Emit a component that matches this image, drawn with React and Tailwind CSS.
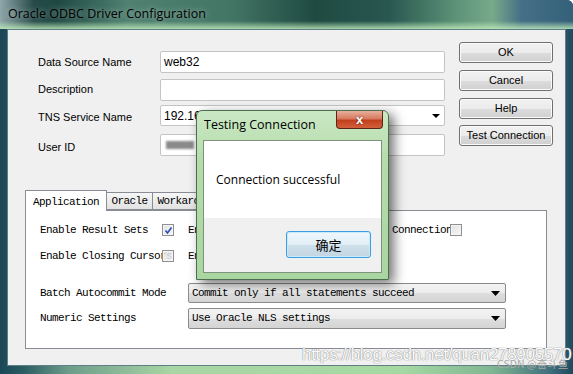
const sans = "font-['Liberation_Sans',Arial,sans-serif]";
const mono = "font-['Liberation_Mono','Courier_New',monospace]";

function Field({ label, children, className = '', labelClass = '' }) {
  return (
    <div className={`flex items-center ${className}`}>
      <span className={`w-[122px] text-[11px] text-black ${labelClass}`}>{label}</span>
      {children}
    </div>
  );
}

function WinButton({ children, className = '' }) {
  return (
    <button className={`block h-[21px] w-[94px] rounded-[3px] border border-[#707070] bg-[linear-gradient(#f2f2f2_0%,#ebebeb_50%,#dddddd_51%,#cfcfcf_100%)] text-[11px] leading-none text-black shadow-[inset_0_0_0_1px_#fbfbfb] ${className}`}>
      {children}
    </button>
  );
}

function Check({ checked }) {
  return (
    <span className="relative z-10 flex h-[12px] w-[12px] items-center justify-center border border-[#8f8f8f] bg-[linear-gradient(135deg,rgba(220,220,220,0.85),rgba(246,246,246,0.85))] shadow-[inset_0_0_0_1px_#f4f4f4]">
      {checked && (
        <svg width="9" height="9" viewBox="0 0 9 9">
          <path d="M1.5 4.5 L3.5 7 L7.5 1.5" fill="none" stroke="#2a48b8" strokeWidth="1.6" />
        </svg>
      )}
    </span>
  );
}

function Combo({ value, className = '' }) {
  return (
    <div className={`flex w-[318px] items-center justify-between rounded-[2px] border border-[#8a8a8a] bg-[linear-gradient(#f3f3f3_0%,#ececec_50%,#dedede_51%,#d4d4d4_100%)] pl-[3px] pr-[5px] ${className}`}>
      <span className={`${mono} text-[11px] tracking-[-0.6px] text-black`}>{value}</span>
      <svg width="9" height="5" viewBox="0 0 9 5">
        <path d="M0 0 H9 L4.5 5 Z" fill="#000" />
      </svg>
    </div>
  );
}

function TestDialog() {
  return (
    <div className={`absolute left-[196px] top-[110px] flex h-[170px] w-[193px] flex-col rounded-t-[6px] border border-[#4d6d50] bg-[linear-gradient(#cbe8c4_0%,#b4dcab_30%,#a9d6a0_100%)] shadow-[5px_4px_12px_rgba(0,0,0,0.55)] ${sans}`}>
      <div className="flex h-[29px] items-start justify-between pl-[7px] pr-[5px]">
        <span className="pt-[5px] font-['Open_Sans',sans-serif] text-[12.5px] text-black">Testing Connection</span>
        <div className="flex h-[18px] w-[47px] items-center justify-center rounded-b-[4px] border border-t-0 border-[#5a2418] bg-[linear-gradient(#e8b09e_0%,#d77a5e_45%,#c2401e_55%,#d2603c_100%)]">
          <span className="text-[13px] font-bold leading-none text-white [text-shadow:0_0_2px_#5a2418]">x</span>
        </div>
      </div>
      <div className="mx-[6px] flex h-[133px] flex-col border border-[#7d917d]">
        <div className="flex h-[77px] items-center bg-white pl-[12px]">
          <span className="font-['Open_Sans',sans-serif] text-[12px] text-black">Connection successful</span>
        </div>
        <div className="flex flex-1 items-start justify-end bg-[#f0f0f0] pr-[10px] pt-[13px]">
          <button className="h-[27px] w-[85px] rounded-[3px] border border-[#3c9ee0] bg-[linear-gradient(#eef7fc_0%,#e2eef6_50%,#cfe0ea_51%,#c2d6e2_100%)] font-['Noto_Sans_CJK_SC',sans-serif] text-[13px] text-black shadow-[inset_0_0_0_1px_#c6ecfb]">
            确定
          </button>
        </div>
      </div>
    </div>
  );
}

export default function App() {
  return (
    <div className={`relative h-[374px] w-[573px] overflow-hidden rounded-tr-[6px] bg-[linear-gradient(90deg,#1b4656_0%,#2a5c62_4%,#6e9c8a_12%,#a9d6a4_30%,#a6d9a2_70%,#7fb592_86%,#3f6e7c_96%,#1f4a5e_100%)] ${sans}`}>
      <div className="absolute inset-x-0 top-0 h-[29px] bg-[linear-gradient(90deg,#8fa6aa_0%,#264a48_6%,#1d4842_10%,#4f8070_22%,#447665_40%,#1f4a42_55%,#295850_68%,#5f9479_80%,#78a98a_86%,#456f86_91%,#34607a_100%)]" />
      <div className="absolute inset-x-0 top-[21px] h-[8px] bg-[linear-gradient(rgba(190,235,185,0)_0%,rgba(190,235,185,0.85)_100%)]" />
      <div className="relative flex h-[29px] items-center pl-[8px]">
        <span className="font-['Open_Sans',sans-serif] text-[12.5px] text-black [text-shadow:0_0_6px_rgba(255,255,255,0.55)]">
          Oracle ODBC Driver Configuration
        </span>
      </div>

      <div className="relative mx-[7px] h-[337px] border border-[#5f7f86] bg-[#f0f0f0]">
        <div className="flex h-[160px] pl-[30px] pt-[12px]">
          <div className="mt-[9px] w-[407px]">
            <Field label="Data Source Name" className="mb-[6px]">
              <div className="flex h-[22px] w-[285px] items-center rounded-[2px] border border-[#c4c4c4] bg-white pl-[3px] text-[12px]">web32</div>
            </Field>
            <Field label="Description" className="mb-[4px]" labelClass="-mt-[2px]">
              <div className="h-[22px] w-[285px] rounded-[2px] border border-[#c4c4c4] bg-white" />
            </Field>
            <Field label="TNS Service Name" className="mb-[8px]" labelClass="mt-[4px]">
              <div className="flex h-[21px] w-[285px] items-center justify-between rounded-[2px] border border-[#c4c4c4] bg-white pl-[3px] pr-[4px] text-[12px]">
                <span>192.168.1.88/ORCL</span>
                <svg width="8" height="4" viewBox="0 0 8 4">
                  <path d="M0 0 H8 L4 4 Z" fill="#000" />
                </svg>
              </div>
            </Field>
            <Field label="User ID" labelClass="mt-[5px]">
              <div className="flex h-[22px] w-[285px] items-center rounded-[2px] border border-[#c4c4c4] bg-white pl-[5px]">
                <span className="h-[8px] w-[28px] bg-[#8a8a8a] blur-[1px]" />
              </div>
            </Field>
          </div>
          <div className="ml-[14px] flex flex-col gap-[7px]">
            <WinButton>OK</WinButton>
            <WinButton>Cancel</WinButton>
            <WinButton>Help</WinButton>
            <WinButton className="-mt-[1px]">Test Connection</WinButton>
          </div>
        </div>

        <div className={`ml-[17px] ${mono} text-[11px] tracking-[-0.6px] text-black`}>
          <div className="flex h-[20px] items-end">
            <div className="relative z-10 -mb-[1px] flex h-[21px] w-[82px] items-start justify-center border border-b-0 border-[#898c95] bg-white pt-[3px]">Application</div>
            <div className="flex h-[18px] w-[46px] items-center justify-center border border-l-0 border-[#898c95] bg-[linear-gradient(#f6f6f6,#e2e2e2)]">Oracle</div>
            <div className="flex h-[18px] w-[76px] items-center justify-center border border-l-0 border-[#898c95] bg-[linear-gradient(#f6f6f6,#e2e2e2)]">Workarounds</div>
            <div className="flex h-[18px] w-[126px] items-center justify-center border border-l-0 border-[#898c95] bg-[linear-gradient(#f6f6f6,#e2e2e2)]">SQLServer Migration</div>
          </div>
          <div className="h-[139px] w-[522px] border border-[#898c95] bg-white pl-[14px] pt-[12px]">
            <div className="flex h-[14px] items-center">
              <span className="w-[122px] whitespace-nowrap">Enable Result Sets</span>
              <Check checked />
              <span className="ml-[14px] w-[144px] whitespace-nowrap">Enable Query Timeout</span>
              <span className="w-[118px] whitespace-nowrap">Read-Only Connection</span>
              <Check />
            </div>
            <div className="mt-[12px] flex h-[14px] items-center">
              <span className="w-[122px] whitespace-nowrap">Enable Closing Cursors</span>
              <Check />
              <span className="ml-[14px] whitespace-nowrap">Enable Thread Safety</span>
            </div>
            <div className="mt-[20px] flex items-center">
              <span className="w-[148px]">Batch Autocommit Mode</span>
              <Combo value="Commit only if all statements succeed" className="h-[20px]" />
            </div>
            <div className="mt-[5px] flex items-center">
              <span className="w-[148px]">Numeric Settings</span>
              <Combo value="Use Oracle NLS settings" className="h-[21px]" />
            </div>
          </div>
        </div>
      </div>

      <TestDialog />

      <div className="pointer-events-none absolute left-[302px] top-[342px] text-[17px] tracking-[-0.3px] text-[#fafafa] [text-shadow:0_0_1px_#8a8a8a,0_0_1px_#8a8a8a]">
        https://blog.csdn.net/quan278905570
      </div>
      <div className="pointer-events-none absolute left-[497px] top-[357px] font-['Noto_Sans_CJK_SC',sans-serif] text-[10.5px] leading-[14px] text-[#a8a8a8]">
        CSDN @奋斗鱼
      </div>
    </div>
  );
}
